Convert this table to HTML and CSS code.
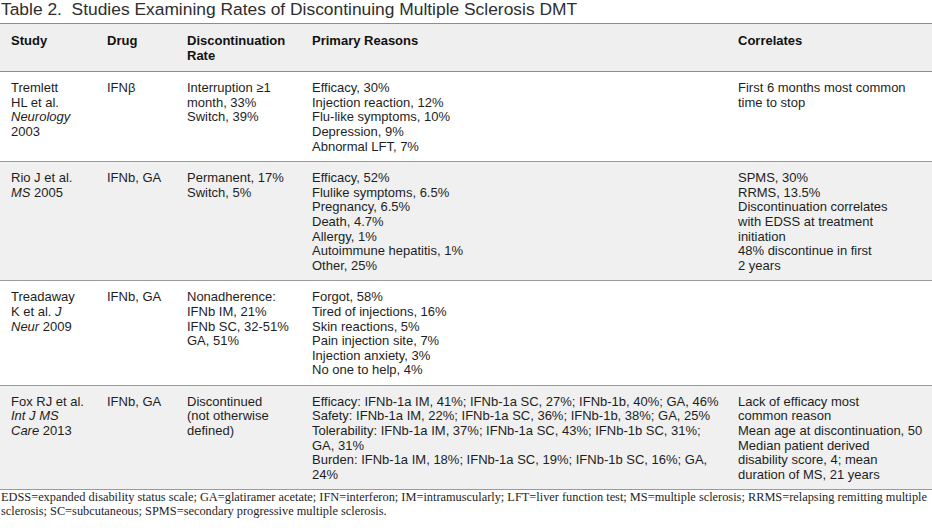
FILE: index.html
```html
<!DOCTYPE html>
<html lang="en">
<head>
<meta charset="utf-8">
<title>Table 2</title>
<link rel="stylesheet" href="styles.css">
</head>
<body>
<div class="page">
  <h1 class="title">Table 2.&nbsp; Studies Examining Rates of Discontinuing Multiple Sclerosis DMT</h1>
  <table class="data">
    <colgroup>
      <col class="c1"><col class="c2"><col class="c3"><col class="c4"><col class="c5">
    </colgroup>
    <thead>
      <tr class="head">
        <th>Study</th>
        <th>Drug</th>
        <th>Discontinuation<br>Rate</th>
        <th>Primary Reasons</th>
        <th>Correlates</th>
      </tr>
    </thead>
    <tbody>
      <tr>
        <td>Tremlett<br>HL et al.<br><i>Neurology</i><br>2003</td>
        <td>IFNβ</td>
        <td>Interruption ≥1<br>month, 33%<br>Switch, 39%</td>
        <td>Efficacy, 30%<br>Injection reaction, 12%<br>Flu-like symptoms, 10%<br>Depression, 9%<br>Abnormal LFT, 7%</td>
        <td>First 6 months most common<br>time to stop</td>
      </tr>
      <tr class="shade">
        <td>Rio J et al.<br><i>MS</i> 2005</td>
        <td>IFNb, GA</td>
        <td>Permanent, 17%<br>Switch, 5%</td>
        <td>Efficacy, 52%<br>Flulike symptoms, 6.5%<br>Pregnancy, 6.5%<br>Death, 4.7%<br>Allergy, 1%<br>Autoimmune hepatitis, 1%<br>Other, 25%</td>
        <td>SPMS, 30%<br>RRMS, 13.5%<br>Discontinuation correlates<br>with EDSS at treatment<br>initiation<br>48% discontinue in first<br>2 years</td>
      </tr>
      <tr>
        <td>Treadaway<br>K et al. <i>J</i><br><i>Neur</i> 2009</td>
        <td>IFNb, GA</td>
        <td>Nonadherence:<br>IFNb IM, 21%<br>IFNb SC, 32-51%<br>GA, 51%</td>
        <td>Forgot, 58%<br>Tired of injections, 16%<br>Skin reactions, 5%<br>Pain injection site, 7%<br>Injection anxiety, 3%<br>No one to help, 4%</td>
        <td></td>
      </tr>
      <tr class="shade">
        <td>Fox RJ et al.<br><i>Int J MS</i><br><i>Care</i> 2013</td>
        <td>IFNb, GA</td>
        <td>Discontinued<br>(not otherwise<br>defined)</td>
        <td>Efficacy: IFNb-1a IM, 41%; IFNb-1a SC, 27%; IFNb-1b, 40%; GA, 46%<br>Safety: IFNb-1a IM, 22%; IFNb-1a SC, 36%; IFNb-1b, 38%; GA, 25%<br>Tolerability: IFNb-1a IM, 37%; IFNb-1a SC, 43%; IFNb-1b SC, 31%;<br>GA, 31%<br>Burden: IFNb-1a IM, 18%; IFNb-1a SC, 19%; IFNb-1b SC, 16%; GA,<br>24%</td>
        <td>Lack of efficacy most<br>common reason<br>Mean age at discontinuation, 50<br>Median patient derived<br>disability score, 4; mean<br>duration of MS, 21 years</td>
      </tr>
    </tbody>
  </table>
  <p class="note">EDSS=expanded disability status scale; GA=glatiramer acetate; IFN=interferon; IM=intramuscularly; LFT=liver function test; MS=multiple sclerosis; RRMS=relapsing remitting multiple<br>sclerosis; SC=subcutaneous; SPMS=secondary progressive multiple sclerosis.</p>
</div>
</body>
</html>
```
FILE: styles.css
```css
html, body {
  margin: 0;
  padding: 0;
  background: #ffffff;
}

.page {
  width: 932px;
  color: #1e1e1e;
  font-family: "Liberation Sans", Arial, Helvetica, sans-serif;
}

.title {
  margin: 0;
  padding-left: 1px;
  height: 23px;
  font-size: 17.4px;
  line-height: 19px;
  font-weight: normal;
  color: #2e2e2e;
  white-space: nowrap;
}

.data {
  width: 932px;
  border-collapse: collapse;
  table-layout: fixed;
  font-size: 13px;
  line-height: 14.6px;
}

.c1 { width: 96px; }
.c2 { width: 80px; }
.c3 { width: 125px; }
.c4 { width: 426px; }
.c5 { width: 205px; }

.data th,
.data td {
  text-align: left;
  vertical-align: top;
  padding: 9px 4px 7px 11px;
  white-space: nowrap;
}

.head {
  background: #efefef;
  border-top: 1px solid #8c8c8c;
  border-bottom: 1px solid #8c8c8c;
}

.head th {
  font-weight: bold;
  padding-top: 10px;
  padding-bottom: 8px;
  color: #111;
}

.data tbody tr {
  border-bottom: 1px solid #9a9a9a;
}

.data tbody tr.shade {
  background: #f0f0f0;
}

.data i {
  font-style: italic;
}

.note {
  margin: 0;
  padding-left: 1px;
  font-family: "Liberation Serif", "Times New Roman", serif;
  font-size: 12.35px;
  line-height: 14px;
  color: #1e1e1e;
  white-space: nowrap;
}
```
